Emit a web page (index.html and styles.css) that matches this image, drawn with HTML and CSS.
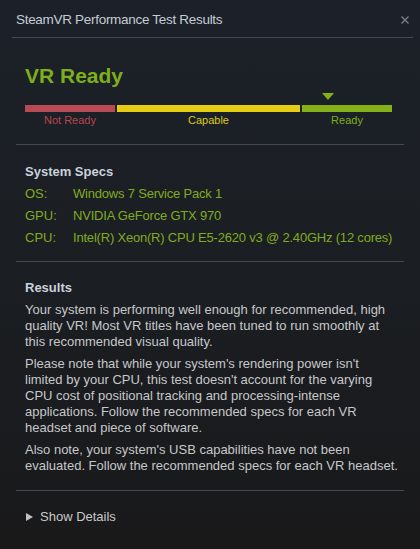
FILE: index.html
```html
<!DOCTYPE html>
<html lang="en">
<head>
    <meta charset="UTF-8">
    <meta name="viewport" content="width=device-width, initial-scale=1.0">
    <title>SteamVR Performance Test Results</title>
    <link rel="stylesheet" href="styles.css">
</head>
<body>
    <div class="titlebar">
        <span class="title">SteamVR Performance Test Results</span>
        <span class="close">
            <svg width="8" height="8" viewBox="0 0 8 8"><path d="M0.5 0.5 L7.5 7.5 M7.5 0.5 L0.5 7.5" stroke="#7b7f84" stroke-width="1.4" fill="none"/></svg>
        </span>
    </div>

    <div class="content">
        <section class="rating">
            <h1>VR Ready</h1>
            <div class="marker-row">
                <div class="marker" style="margin-left: 297px"></div>
            </div>
            <div class="scale">
                <div class="seg seg-red"></div>
                <div class="seg seg-yellow"></div>
                <div class="seg seg-green"></div>
                <span class="lbl lbl-red">Not Ready</span>
                <span class="lbl lbl-yellow">Capable</span>
                <span class="lbl lbl-green">Ready</span>
            </div>
        </section>

        <section class="specs">
            <h2>System Specs</h2>
            <div class="spec-row"><span class="spec-key">OS:</span><span class="spec-val">Windows 7 Service Pack 1</span></div>
            <div class="spec-row"><span class="spec-key">GPU:</span><span class="spec-val">NVIDIA GeForce GTX 970</span></div>
            <div class="spec-row"><span class="spec-key">CPU:</span><span class="spec-val">Intel(R) Xeon(R) CPU E5-2620 v3 @ 2.40GHz (12 cores)</span></div>
        </section>

        <section class="results">
            <h2>Results</h2>
            <p>Your system is performing well enough for recommended, high quality VR! Most VR titles have been tuned to run smoothly at this recommended visual quality.</p>
            <p>Please note that while your system's rendering power isn't limited by your CPU, this test doesn't account for the varying CPU cost of positional tracking and processing-intense applications. Follow the recommended specs for each VR headset and piece of software.</p>
            <p>Also note, your system's USB capabilities have not been evaluated. Follow the recommended specs for each VR headset.</p>
        </section>

        <section class="details">
            <span class="arrow"></span>
            <span>Show Details</span>
        </section>
    </div>
</body>
</html>
```

FILE: styles.css
```css
html {
    background: #19191a;
}
body {
    margin: 0;
    height: 549px;
    font-family: "Liberation Sans", Arial, sans-serif;
    font-size: 13px;
    color: #c6c8ca;
    background: linear-gradient(to bottom, #1c2129 0%, #1b1f24 40%, #19191a 100%);
    overflow: hidden;
}
.titlebar {
    display: flex;
    align-items: center;
    justify-content: space-between;
    margin: 0 7px 0 12px;
    padding: 12px 4px 9px 4px;
    border-bottom: 1px solid #46494d;
}
.title {
    font-size: 13.5px;
    line-height: 16px;
    letter-spacing: -0.3px;
    color: #c4ccd4;
}
.close {
    display: flex;
    margin-top: -1px;
}
.content {
    margin: 0 16px;
}
.content section {
    padding: 0 5px 0 9px;
    border-bottom: 1px solid #46494d;
}
.content section:last-child {
    border-bottom: none;
}
h1 {
    margin: 0;
    font-size: 21px;
    line-height: 24px;
    font-weight: bold;
    color: #7fae1c;
}
h2 {
    margin: 0;
    font-size: 13px;
    line-height: 16px;
    font-weight: bold;
    color: #c9d2db;
}
.rating {
    padding-top: 26px !important;
    padding-bottom: 17px !important;
}
.marker-row {
    display: flex;
    margin-top: 5px;
    height: 7px;
}
.marker {
    width: 0;
    height: 0;
    border-left: 6px solid transparent;
    border-right: 6px solid transparent;
    border-top: 7px solid #83b117;
}
.scale {
    display: grid;
    grid-template-columns: 90px 183px 90px;
    column-gap: 2px;
    margin-top: 5px;
}
.seg {
    height: 7px;
}
.seg-red { background: #b84a53; }
.seg-yellow { background: #e6cc12; }
.seg-green { background: #83b117; }
.lbl {
    margin-top: 2px;
    font-size: 11px;
    line-height: 13px;
    text-align: center;
}
.lbl-red { color: #b6474f; }
.lbl-yellow { color: #dcc816; }
.lbl-green { color: #80ad1b; }
.specs {
    padding-top: 19px !important;
    padding-bottom: 12px !important;
}
.specs h2 {
    margin-bottom: 3px;
}
.spec-row {
    display: flex;
    line-height: 22px;
    color: #80ab20;
}
.spec-key {
    width: 48px;
    flex-shrink: 0;
}
.spec-val {
    white-space: nowrap;
    letter-spacing: -0.2px;
}
.results {
    padding-top: 18px !important;
    padding-bottom: 16px !important;
}
.results h2 {
    margin-bottom: 6px;
}
.results p {
    margin: 0 0 6px 0;
    line-height: 16px;
}
.results p:last-child {
    margin-bottom: 0;
}
.details {
    display: flex;
    align-items: center;
    padding-top: 18px !important;
    line-height: 16px;
    color: #c8c9ca;
}
.arrow {
    width: 0;
    height: 0;
    margin: 0 7px 0 1px;
    border-top: 4.5px solid transparent;
    border-bottom: 4.5px solid transparent;
    border-left: 7px solid #c0c1c2;
}
```
